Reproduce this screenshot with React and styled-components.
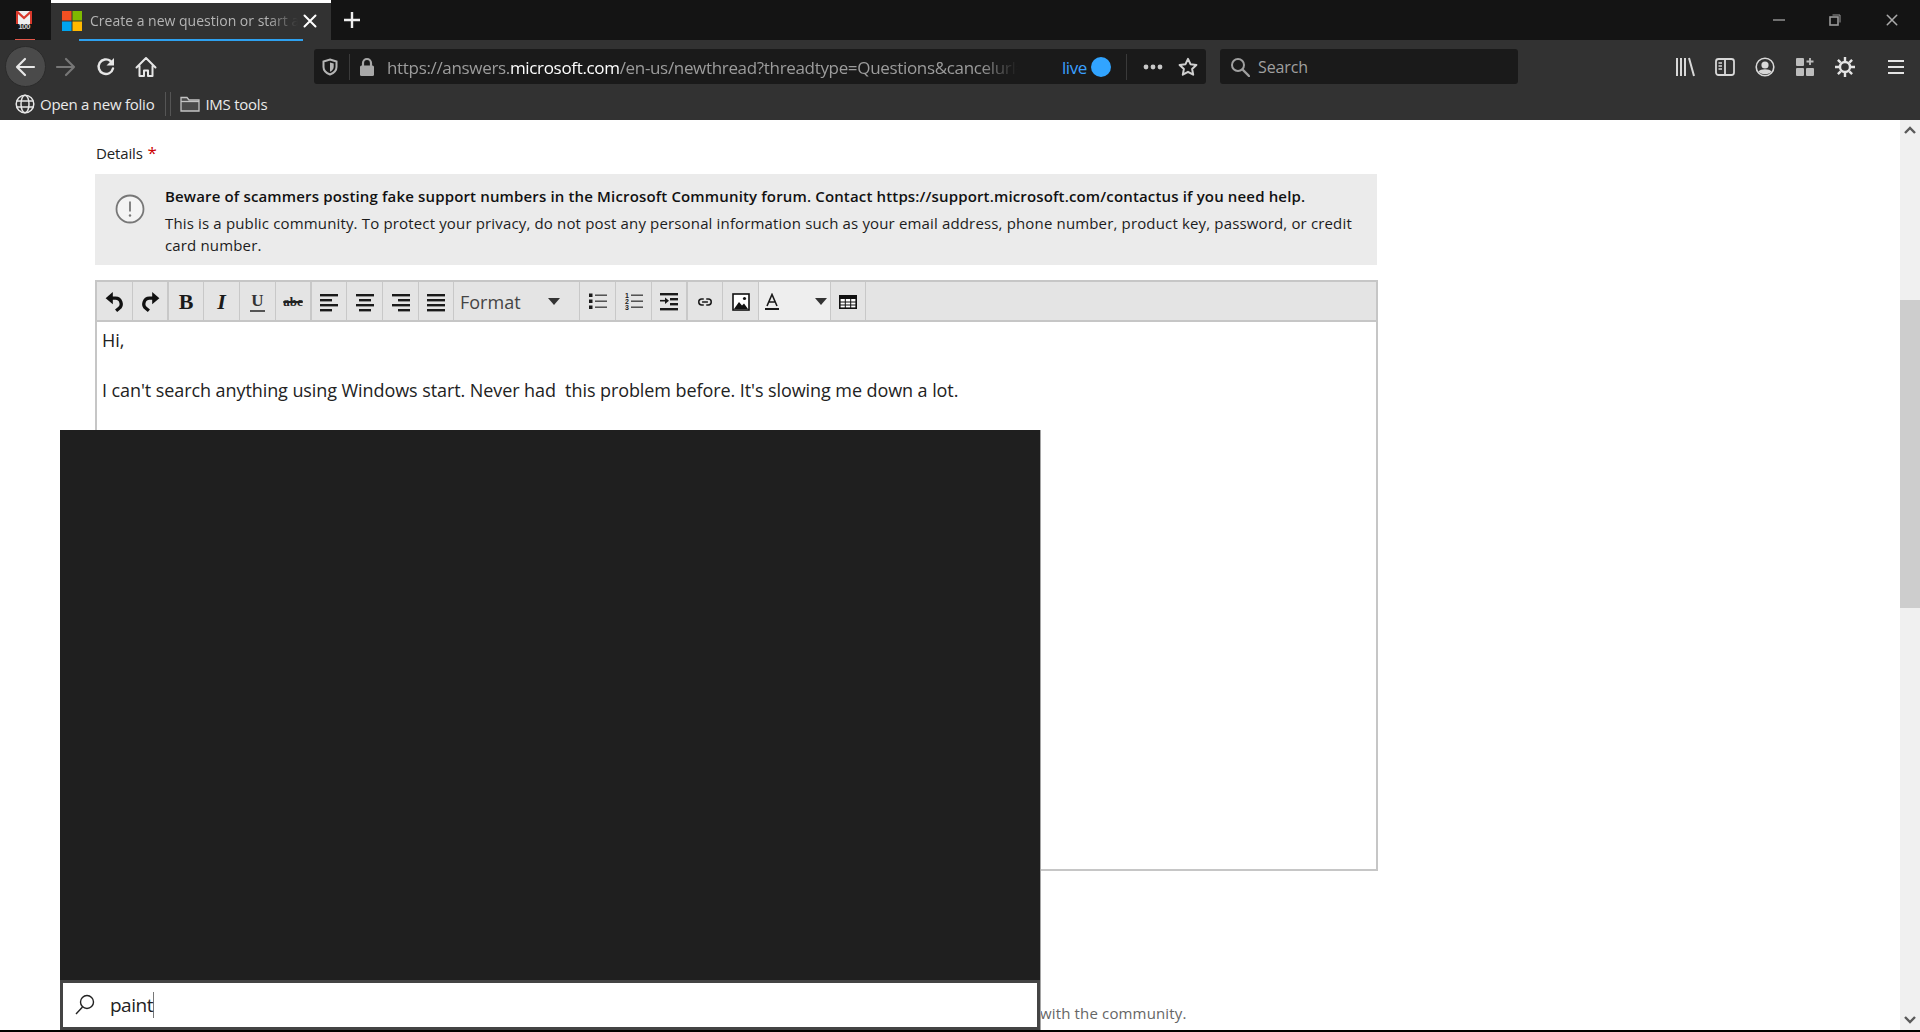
import React from "react";
import styled, { createGlobalStyle } from "styled-components";

const FONT = `"Open Sans", "Noto Sans", "Liberation Sans", sans-serif`;

const Global = createGlobalStyle`
  html, body { margin: 0; padding: 0; background: #000; overflow: hidden; }
  * { box-sizing: border-box; }
  body { font-family: ${FONT}; }
`;

const Screen = styled.div`
  position: relative; width: 1920px; height: 1032px; display: flex; flex-direction: column;
  overflow: hidden; background: #000;
`;
const TabBar = styled.div`
  height: 40px; flex: none; display: flex; background: #141414;
`;
const PinnedTab = styled.div`
  position: relative; width: 51px; display: flex; align-items: center; justify-content: center; padding-right: 3px;
  &::after { content: ""; position: absolute; left: 15px; width: 20px; bottom: 0; height: 1px; background: #e2574a; }
`;
const ActiveTab = styled.div`
  position: relative; width: 280px; background: #323232; border-top: 3px solid #fff;
  display: flex; align-items: center; padding: 0 0 2px 11px;
  &::after { content: ""; position: absolute; left: 28px; width: 224px; bottom: -1px; height: 2px; background: #2ea1f0; }
`;
const TabTitle = styled.span`
  margin-left: 8px; width: 208px; white-space: nowrap; overflow: hidden; font-size: 14px; color: #b4b4b4;
  -webkit-mask-image: linear-gradient(to right, #000 85%, transparent 100%);
`;
const TabClose = styled.span`
  margin-left: 5px; display: flex;
`;
const NewTab = styled.span`
  width: 42px; display: flex; align-items: center; justify-content: center;
`;
const WindowControls = styled.div`
  margin-left: auto; display: flex; align-items: center;
`;
const WindowButton = styled.span`
  width: 56.5px; height: 40px; display: flex; align-items: center; justify-content: center;
`;
const NavBar = styled.div`
  height: 50px; flex: none; display: flex; align-items: flex-start; padding: 9px 4px 0 5px; background: #323232;
`;
const BackCircle = styled.span`
  width: 41px; height: 41px; margin-top: -3px; flex: none; border-radius: 50%; background: #4a4a4a; border: 1px solid #2b2b2b;
  display: flex; align-items: center; justify-content: center; padding-right: 2px;
`;
const IconSlot = styled.span`
  width: 40px; height: 35px; flex: none; display: flex; align-items: center; justify-content: center;
  margin-left: ${(p) => p.$ml || 0}px;
`;
const UrlBar = styled.div`
  width: 892px; height: 35px; margin-left: 148px; flex: none; background: #1a1a1a; border-radius: 3px;
  display: flex; align-items: center; padding: 0 8px;
`;
const UrlDivider = styled.span`
  width: 1px; height: 26px; background: #3a3a3a; flex: none; margin-left: ${(p) => p.$ml}px;
`;
const UrlIcon = styled.span`
  display: flex; flex: none; margin-left: ${(p) => p.$ml || 0}px;
`;
const UrlText = styled.div`
  margin-left: 11px; padding-top: 1px; width: 631px; flex: none; white-space: nowrap; overflow: hidden; font-size: 17px; color: #9c9c9c;
  letter-spacing: -0.33px;
  -webkit-mask-image: linear-gradient(to right, #000 94%, transparent 100%);
  b { font-weight: 400; color: #fff; }
`;
const LiveGroup = styled.div`
  margin-left: auto; display: flex; align-items: center;
`;
const LiveText = styled.span`
  font-size: 17px; color: #3aa0ff; margin-right: 4px; letter-spacing: -0.4px; padding-top: 1px;
`;
const LiveDot = styled.span`
  width: 20px; height: 20px; border-radius: 50%; background: #31a4ff; flex: none;
`;
const SearchBar = styled.div`
  width: 298px; height: 35px; margin-left: 14px; flex: none; background: #1a1a1a; border-radius: 3px;
  display: flex; align-items: center; padding-left: 10px; font-size: 16px; color: #a0a0a0; letter-spacing: -0.1px;
  span { margin-left: 8px; }
`;
const RightTools = styled.div`
  margin-left: auto; display: flex;
`;
const Bookmarks = styled.div`
  height: 30px; flex: none; background: #323232; display: flex; align-items: center; padding: 0 0 2px 15px;
  font-size: 15px; color: #eaeaea; letter-spacing: -0.25px;
`;
const BookmarkLabel = styled.span`
  margin-left: ${(p) => p.$ml}px; white-space: nowrap;
`;
const BookmarkSeparator = styled.span`
  width: 6px; height: 24px; margin-left: 11px; margin-right: 9px; flex: none;
  border-left: 1px solid #555; border-right: 1px solid #555;
`;
const Viewport = styled.div`
  flex: 1; min-height: 0; display: flex; background: #fff; margin-bottom: 2px;
`;
const Page = styled.main`
  flex: 1; min-width: 0; padding: 22px 0 0 95px; overflow: hidden;
`;
const DetailsLabel = styled.div`
  height: 22px; line-height: 22px; font-size: 15px; color: #222; margin-bottom: 10px; padding-left: 1px; letter-spacing: -0.15px;
  i { font-style: normal; color: #c00; margin-left: 1px; font-size: 17px; }
`;
const Notice = styled.section`
  width: 1282px; height: 91px; background: #ebebeb; display: flex; padding: 11px 12px 0 20px;
`;
const NoticeIcon = styled.span`
  width: 50px; flex: none; display: flex; padding-top: 9px;
`;
const NoticeBody = styled.div`
  flex: 1; font-size: 15px; line-height: 22px; color: #1c1c1c; letter-spacing: 0.155px;
`;
const NoticeHead = styled.div`
  font-weight: 600; color: #111; margin-bottom: 5px; white-space: nowrap; letter-spacing: 0.15px;
`;
const Editor = styled.section`
  width: 1283px; height: 591px; margin-top: 15px; border: 2px solid #c6c6c6;
`;
const Toolbar = styled.div`
  height: 40px; display: flex; background: #e4e4e4; border-bottom: 2px solid #c6c6c6; padding-left: 1px;
`;
const ToolButton = styled.span`
  width: ${(p) => p.$w}px; height: 38px; flex: none; display: flex; align-items: center;
  justify-content: ${(p) => (p.$pr !== undefined ? "space-between" : "center")};
  padding: ${(p) => (p.$pr !== undefined ? `1px ${p.$pr}px 0 ${p.$pl}px` : "1px 0 0")};
  border-right: ${(p) => (p.$sep ? 2 : 1)}px solid #c8c8c8;
  background: ${(p) => (p.$light ? "#eeeeee" : "#e4e4e4")};
`;
const GlyphBold = styled.span`
  font: 700 22px "Liberation Serif", serif; color: #1a1a1a;
`;
const GlyphItalic = styled.span`
  font: italic 700 22px "Liberation Serif", serif; color: #1a1a1a;
`;
const GlyphUnderline = styled.span`
  font: 700 17px "Liberation Serif", serif; color: #333; border-bottom: 2px solid #555; line-height: 18px; padding: 0 1px;
`;
const GlyphStrike = styled.span`
  font: 700 13px "Liberation Serif", serif; color: #222; text-decoration: line-through; text-decoration-thickness: 2px;
`;
const FormatLabel = styled.span`
  font-size: 18px; color: #444; letter-spacing: 0;
`;
const EditorBody = styled.div`
  padding: 6px 0 0 5px; font-size: 18px; line-height: 25px; color: #222; letter-spacing: -0.08px;
`;
const EditorLine = styled.div`
  min-height: 25px; white-space: pre;
`;
const Footnote = styled.div`
  margin: 131px 0 0 945px; height: 22px; line-height: 22px; font-size: 15px; color: #666; white-space: nowrap; letter-spacing: 0.15px;
`;
const Scrollbar = styled.div`
  width: 20px; flex: none; background: #f0f0f0; display: flex; flex-direction: column;
`;
const ScrollArrow = styled.span`
  width: 20px; height: 20px; flex: none; display: flex; align-items: center; justify-content: center;
  margin-top: ${(p) => (p.$end ? "auto" : "0")};
`;
const ScrollThumb = styled.span`
  height: 308px; margin-top: 160px; background: #cdcdcd; flex: none;
`;
const StartPanel = styled.aside`
  position: absolute; left: 60px; top: 430px; width: 981px; height: 600px; background: #1f1f1f;
  border-right: 1px solid #a5a5a5; display: flex; flex-direction: column; justify-content: flex-end;
`;
const StartSearch = styled.div`
  height: 50px; border: 3px solid #444; background: #fff; display: flex; align-items: center; padding-left: 11px;
  font-size: 19px; color: #222;
`;
const StartText = styled.span`
  margin-left: 14px; letter-spacing: -0.5px; border-right: 1px solid #777; line-height: 26px;
`;

const S = { fill: "none", strokeLinecap: "round", strokeLinejoin: "round" };

const Gmail = () => (
  <svg width="20" height="24" viewBox="0 0 20 24">
    <rect x="2" y="3" width="16" height="13" fill="#f0f0f0" />
    <path d="M2 16V3h2l6 5.5L16 3h2v13h-2V6l-6 5.5L4 6v10z" fill="#d9392c" />
    <text x="10" y="21" fontSize="8" fontWeight="700" textAnchor="middle" fill="#cfcfcf" fontFamily="Liberation Sans, sans-serif" letterSpacing="-0.6">100</text>
  </svg>
);
const MsLogo = () => (
  <svg width="20" height="20" viewBox="0 0 20 20">
    <rect width="9.5" height="9.5" fill="#f25022" />
    <rect x="10.5" width="9.5" height="9.5" fill="#7fba00" />
    <rect y="10.5" width="9.5" height="9.5" fill="#00a4ef" />
    <rect x="10.5" y="10.5" width="9.5" height="9.5" fill="#ffb900" />
  </svg>
);
const X = ({ size = 14, c = "#fff", w = 2 }) => (
  <svg width={size} height={size} viewBox="0 0 14 14"><path d="M1.5 1.5l11 11M12.5 1.5l-11 11" stroke={c} strokeWidth={w} {...S} /></svg>
);
const Plus = () => (
  <svg width="18" height="18" viewBox="0 0 18 18"><path d="M9 1v16M1 9h16" stroke="#eee" strokeWidth="2.4" /></svg>
);
const Minimize = () => (
  <svg width="12" height="12" viewBox="0 0 12 12"><path d="M0 6h12" stroke="#999" strokeWidth="1.4" /></svg>
);
const Restore = () => (
  <svg width="12" height="12" viewBox="0 0 12 12" fill="none" stroke="#999"><rect x="1" y="3" width="8" height="8" strokeWidth="1.6" /><path d="M3.5 1H11v7.5" strokeWidth="1" /></svg>
);
const Arrow = ({ back, c }) => (
  <svg width="22" height="22" viewBox="0 0 22 22" style={back ? undefined : { transform: "scaleX(-1)" }}>
    <path d="M20 11H3M11 3l-8 8 8 8" stroke={c} strokeWidth="2.2" {...S} />
  </svg>
);
const Reload = () => (
  <svg width="22" height="22" viewBox="0 0 22 22">
    <path d="M18 12.5A7.3 7.3 0 1 1 15.5 5" stroke="#e6e6e6" strokeWidth="2.4" {...S} />
    <path d="M19 2v7.5h-7.5z" fill="#e6e6e6" />
  </svg>
);
const Home = () => (
  <svg width="22" height="22" viewBox="0 0 22 22">
    <path d="M1.5 11.5L11 2l9.5 9.5M4.5 9.5V20h4.5v-5.5h4V20h4.5V9.5" stroke="#e6e6e6" strokeWidth="2" {...S} />
  </svg>
);
const Shield = () => (
  <svg width="16" height="18" viewBox="0 0 16 18">
    <path d="M8 1.5l6.5 2V9c0 3.8-3 6.2-6.5 7.5C4.5 15.2 1.5 12.8 1.5 9V3.5z" fill="none" stroke="#b5b5b5" strokeWidth="2" />
    <path d="M8 4.5l3.7 1.1V9c0 2.3-1.7 3.8-3.7 4.7z" fill="#b5b5b5" />
  </svg>
);
const Lock = () => (
  <svg width="18" height="20" viewBox="0 0 18 20">
    <path d="M5 9V6a4 4 0 0 1 8 0v3" fill="none" stroke="#a8a8a8" strokeWidth="2.2" />
    <rect x="2" y="8.5" width="14" height="10.5" rx="1.5" fill="#a8a8a8" />
  </svg>
);
const Dots = () => (
  <svg width="22" height="6" viewBox="0 0 22 6"><g fill="#c8c8c8"><circle cx="4" cy="3" r="2.4" /><circle cx="11" cy="3" r="2.4" /><circle cx="18" cy="3" r="2.4" /></g></svg>
);
const Star = () => (
  <svg width="20" height="20" viewBox="0 0 20 20">
    <path d="M10 1.8l2.5 5.4 5.9.7-4.3 4 1.1 5.8L10 14.8l-5.2 2.9 1.1-5.8-4.3-4 5.9-.7z" fill="none" stroke="#d0d0d0" strokeWidth="2" strokeLinejoin="round" />
  </svg>
);
const SearchGlass = ({ c = "#a0a0a0" }) => (
  <svg width="20" height="20" viewBox="0 0 20 20">
    <circle cx="8" cy="8" r="6" fill="none" stroke={c} strokeWidth="2" /><path d="M12.5 12.5L19 19" stroke={c} strokeWidth="2.4" strokeLinecap="round" />
  </svg>
);
const Library = () => (
  <svg width="20" height="20" viewBox="0 0 20 20"><path d="M2 1v18M6 1v18M10 1v18M14 1l5 18" stroke="#d8d8d8" strokeWidth="2" /></svg>
);
const SidebarIcon = () => (
  <svg width="20" height="20" viewBox="0 0 20 20" fill="none" stroke="#d8d8d8">
    <rect x="1" y="2" width="18" height="16" rx="2.5" strokeWidth="1.8" /><path d="M10 2v16" strokeWidth="1.8" /><path d="M3.5 6H7M3.5 9H7M3.5 12H7" strokeWidth="1.4" />
  </svg>
);
const Account = () => (
  <svg width="20" height="20" viewBox="0 0 20 20">
    <circle cx="10" cy="10" r="8.8" fill="none" stroke="#d8d8d8" strokeWidth="1.6" />
    <circle cx="10" cy="8" r="3.6" fill="#d8d8d8" /><path d="M3.5 14.5c2-3 11-3 13 0-2 3.5-11 3.5-13 0z" fill="#d8d8d8" />
  </svg>
);
const Extensions = () => (
  <svg width="20" height="20" viewBox="0 0 20 20" fill="#bdbdbd">
    <rect x="1" y="1" width="8" height="8" rx="1" /><rect x="1" y="11" width="8" height="8" rx="1" /><rect x="11" y="11" width="8" height="8" rx="1" />
    <path d="M15 1v7M11.5 4.5h7" stroke="#bdbdbd" strokeWidth="1.8" />
  </svg>
);
const Gear = () => (
  <svg width="22" height="22" viewBox="0 0 22 22">
    <circle cx="11" cy="11" r="5" fill="none" stroke="#e4e4e4" strokeWidth="2.4" />
    <path d="M11 1v4M11 17v4M1 11h4M17 11h4M3.9 3.9l2.8 2.8M15.3 15.3l2.8 2.8M18.1 3.9l-2.8 2.8M6.7 15.3l-2.8 2.8" stroke="#e4e4e4" strokeWidth="2.4" />
  </svg>
);
const Hamburger = () => (
  <svg width="18" height="18" viewBox="0 0 18 18"><path d="M1 3h16M1 9h16M1 15h16" stroke="#e4e4e4" strokeWidth="2.2" /></svg>
);
const Globe = () => (
  <svg width="20" height="20" viewBox="0 0 20 20" fill="none" stroke="#e6e6e6" strokeWidth="1.5">
    <circle cx="10" cy="10" r="8.8" /><ellipse cx="10" cy="10" rx="4" ry="8.8" /><path d="M1.5 7h17M1.5 13h17" />
  </svg>
);
const Folder = () => (
  <svg width="20" height="18" viewBox="0 0 20 18">
    <path d="M1 16V2.5h6l2 2.5h10v11z" fill="#4a4a4a" stroke="#c4c4c4" strokeWidth="1.3" /><path d="M1 6.5h18" stroke="#c4c4c4" strokeWidth="1.3" />
  </svg>
);
const Alert = () => (
  <svg width="30" height="30" viewBox="0 0 30 30">
    <circle cx="15" cy="15" r="13.5" fill="#f4f4f4" stroke="#777" strokeWidth="1.8" /><path d="M15 7.5v10" stroke="#777" strokeWidth="1.8" /><circle cx="15" cy="21.5" r="1.2" fill="#777" />
  </svg>
);
const Undo = ({ flip }) => (
  <svg width="22" height="22" viewBox="0 0 20 20" style={flip ? { transform: "scaleX(-1)" } : undefined}>
    <path d="M4 6.5h6.5a5.2 5.2 0 0 1 3 9.4L11 18" fill="none" stroke="#111" strokeWidth="3" />
    <path d="M8 1v11L1.5 6.5z" fill="#111" />
  </svg>
);
const Lines = ({ rows }) => (
  <svg width="20" height="20" viewBox="0 0 20 20">
    {rows.map(([x, w], i) => <rect key={i} x={x} y={2 + i * 5} width={w} height="2.4" fill="#1a1a1a" />)}
  </svg>
);
const Bullets = () => (
  <svg width="20" height="20" viewBox="0 0 20 20" fill="#1a1a1a">
    {[3, 9, 15].map((y) => <g key={y}><rect x="1" y={y - 1.5} width="3.5" height="3.5" /><rect x="7" y={y - 0.5} width="12" height="1.4" fill="#444" /></g>)}
  </svg>
);
const Numbered = () => (
  <svg width="20" height="20" viewBox="0 0 20 20" fill="#1a1a1a">
    {[3, 9, 15].map((y, i) => (
      <g key={y}><text x="1" y={y + 3} fontSize="7" fontWeight="700" fontFamily="Liberation Sans, sans-serif">{i + 1}</text><rect x="7" y={y - 0.5} width="12" height="1.4" fill="#444" /></g>
    ))}
  </svg>
);
const Indent = () => (
  <svg width="20" height="20" viewBox="0 0 20 20" fill="#1a1a1a">
    <rect x="1" y="1" width="18" height="2.4" /><rect x="11" y="6" width="8" height="2.4" /><rect x="11" y="11" width="8" height="2.4" /><rect x="1" y="16" width="18" height="2.4" />
    <path d="M1 8.7h6.5" stroke="#1a1a1a" strokeWidth="1.6" /><path d="M6 5.5l4 3.2-4 3.2z" />
  </svg>
);
const LinkIcon = () => (
  <svg width="16" height="10" viewBox="0 0 16 12" fill="none" stroke="#1a1a1a" strokeWidth="1.8">
    <path d="M6.5 2.5H4a3.5 3.5 0 0 0 0 7h2.5M9.5 2.5H12a3.5 3.5 0 0 1 0 7H9.5M4.5 6h7" />
  </svg>
);
const ImageIcon = () => (
  <svg width="18" height="18" viewBox="0 0 18 18">
    <rect x="1" y="1" width="16" height="16" fill="#fff" stroke="#111" strokeWidth="1.6" />
    <path d="M2 16l5-7 3 3.5 2-2 4 5.5z" fill="#111" /><circle cx="12.5" cy="5.5" r="1.6" fill="#111" />
  </svg>
);
const ColorA = () => (
  <svg width="16" height="18" viewBox="0 0 16 18">
    <path d="M3 13L8 1.5 13 13M4.8 9h6.4" fill="none" stroke="#1a1a1a" strokeWidth="1.6" /><rect x="1" y="15" width="14" height="2" fill="#1a1a1a" />
  </svg>
);
const Caret = () => (
  <svg width="12" height="7" viewBox="0 0 12 7"><path d="M0 0h12L6 7z" fill="#333" /></svg>
);
const TableIcon = () => (
  <svg width="18" height="14" viewBox="0 0 18 14">
    <rect x="0.8" y="0.8" width="16.4" height="12.4" fill="#fff" stroke="#111" strokeWidth="1.6" /><rect x="1" y="1" width="16" height="3" fill="#111" />
    <path d="M6.3 4v9M11.7 4v9M1 7h16M1 10h16" stroke="#111" strokeWidth="1" />
  </svg>
);
const Chevron = ({ down }) => (
  <svg width="12" height="8" viewBox="0 0 12 8" style={down ? { transform: "scaleY(-1)" } : undefined}>
    <path d="M1 7l5-5 5 5" fill="none" stroke="#5a5a5a" strokeWidth="2.4" />
  </svg>
);
const Magnifier = () => (
  <svg width="22" height="22" viewBox="0 0 22 22">
    <circle cx="13" cy="8" r="6.5" fill="none" stroke="#222" strokeWidth="1.4" /><path d="M8.5 13L2 20" stroke="#222" strokeWidth="1.4" />
  </svg>
);

const tools = [
  { w: 35, icon: <Undo /> },
  { w: 36, icon: <Undo flip />, sep: true },
  { w: 35, icon: <GlyphBold>B</GlyphBold> },
  { w: 36, icon: <GlyphItalic>I</GlyphItalic> },
  { w: 36, icon: <GlyphUnderline>U</GlyphUnderline> },
  { w: 36, icon: <GlyphStrike>abc</GlyphStrike>, sep: true },
  { w: 35, icon: <Lines rows={[[1, 18], [1, 12], [1, 18], [1, 12]]} /> },
  { w: 36, icon: <Lines rows={[[1, 18], [4, 12], [1, 18], [4, 12]]} /> },
  { w: 36, icon: <Lines rows={[[1, 18], [7, 12], [1, 18], [7, 12]]} /> },
  { w: 35, icon: <Lines rows={[[1, 18], [1, 18], [1, 18], [1, 18]]} /> },
  { w: 126, icon: <><FormatLabel>Format</FormatLabel><Caret /></>, pr: 19, pl: 6 },
  { w: 36, icon: <Bullets /> },
  { w: 36, icon: <Numbered /> },
  { w: 36, icon: <Indent />, sep: true },
  { w: 35, icon: <LinkIcon /> },
  { w: 36, icon: <ImageIcon /> },
  { w: 72, icon: <><ColorA /><Caret /></>, pr: 3, pl: 5, light: true },
  { w: 35, icon: <TableIcon /> },
];

export default function App() {
  return (
    <Screen>
      <Global />
      <TabBar>
        <PinnedTab><Gmail /></PinnedTab>
        <ActiveTab>
          <MsLogo />
          <TabTitle>Create a new question or start a</TabTitle>
          <TabClose><X /></TabClose>
        </ActiveTab>
        <NewTab><Plus /></NewTab>
        <WindowControls>
          <WindowButton><Minimize /></WindowButton>
          <WindowButton><Restore /></WindowButton>
          <WindowButton><X size={12} c="#aaa" w={1.8} /></WindowButton>
        </WindowControls>
      </TabBar>
      <NavBar>
        <BackCircle><Arrow back c="#e8e8e8" /></BackCircle>
        <IconSlot><Arrow c="#777" /></IconSlot>
        <IconSlot><Reload /></IconSlot>
        <IconSlot><Home /></IconSlot>
        <UrlBar>
          <UrlIcon><Shield /></UrlIcon>
          <UrlDivider $ml={11} />
          <UrlIcon $ml={8}><Lock /></UrlIcon>
          <UrlText>https://answers.<b>microsoft.com</b>/en-us/newthread?threadtype=Questions&amp;cancelurl=</UrlText>
          <LiveGroup>
            <LiveText>live</LiveText>
            <LiveDot />
            <UrlDivider $ml={15} />
            <UrlIcon $ml={15}><Dots /></UrlIcon>
            <UrlIcon $ml={14}><Star /></UrlIcon>
          </LiveGroup>
        </UrlBar>
        <SearchBar><SearchGlass /><span>Search</span></SearchBar>
        <RightTools>
          <IconSlot><Library /></IconSlot>
          <IconSlot><SidebarIcon /></IconSlot>
          <IconSlot><Account /></IconSlot>
          <IconSlot><Extensions /></IconSlot>
          <IconSlot><Gear /></IconSlot>
          <IconSlot $ml={11}><Hamburger /></IconSlot>
        </RightTools>
      </NavBar>
      <Bookmarks>
        <Globe />
        <BookmarkLabel $ml={5}>Open a new folio</BookmarkLabel>
        <BookmarkSeparator />
        <Folder />
        <BookmarkLabel $ml={5}>IMS tools</BookmarkLabel>
      </Bookmarks>
      <Viewport>
        <Page>
          <DetailsLabel>Details <i>*</i></DetailsLabel>
          <Notice>
            <NoticeIcon><Alert /></NoticeIcon>
            <NoticeBody>
              <NoticeHead>Beware of scammers posting fake support numbers in the Microsoft Community forum. Contact https://support.microsoft.com/contactus if you need help.</NoticeHead>
              This is a public community. To protect your privacy, do not post any personal information such as your email address, phone number, product key, password, or credit card number.
            </NoticeBody>
          </Notice>
          <Editor>
            <Toolbar>
              {tools.map((t, i) => (
                <ToolButton key={i} $w={t.w} $sep={t.sep} $pr={t.pr} $pl={t.pl} $light={t.light}>{t.icon}</ToolButton>
              ))}
            </Toolbar>
            <EditorBody>
              <EditorLine>Hi,</EditorLine>
              <EditorLine />
              <EditorLine>I can't search anything using Windows start. Never had  this problem before. It's slowing me down a lot.</EditorLine>
            </EditorBody>
          </Editor>
          <Footnote>with the community.</Footnote>
        </Page>
        <Scrollbar>
          <ScrollArrow><Chevron /></ScrollArrow>
          <ScrollThumb />
          <ScrollArrow $end><Chevron down /></ScrollArrow>
        </Scrollbar>
      </Viewport>
      <StartPanel>
        <StartSearch><Magnifier /><StartText>paint</StartText></StartSearch>
      </StartPanel>
    </Screen>
  );
}
